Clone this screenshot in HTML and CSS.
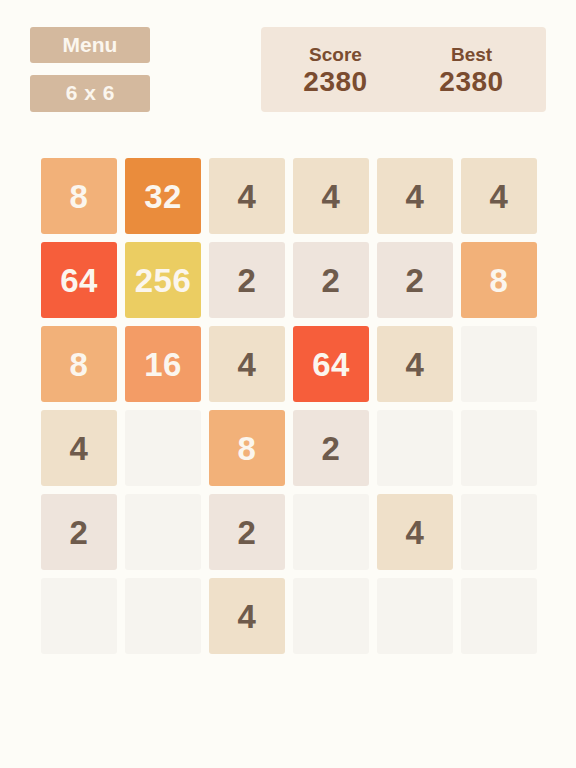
FILE: index.html
```html
<!DOCTYPE html>
<html>
<head>
<meta charset="utf-8">
<link rel="stylesheet" href="styles.css">
</head>
<body>
<div class="page">
  <header class="header">
    <div class="buttons">
      <div class="btn">Menu</div>
      <div class="btn">6 x 6</div>
    </div>
    <div class="scores">
      <div class="score-col"><div class="label">Score</div><div class="value">2380</div></div>
      <div class="score-col"><div class="label">Best</div><div class="value">2380</div></div>
    </div>
  </header>
  <main class="board">
    <div class="tile t8">8</div><div class="tile t32">32</div><div class="tile t4">4</div><div class="tile t4">4</div><div class="tile t4">4</div><div class="tile t4">4</div>
    <div class="tile t64">64</div><div class="tile t256">256</div><div class="tile t2">2</div><div class="tile t2">2</div><div class="tile t2">2</div><div class="tile t8">8</div>
    <div class="tile t8">8</div><div class="tile t16">16</div><div class="tile t4">4</div><div class="tile t64">64</div><div class="tile t4">4</div><div class="tile"></div>
    <div class="tile t4">4</div><div class="tile"></div><div class="tile t8">8</div><div class="tile t2">2</div><div class="tile"></div><div class="tile"></div>
    <div class="tile t2">2</div><div class="tile"></div><div class="tile t2">2</div><div class="tile"></div><div class="tile t4">4</div><div class="tile"></div>
    <div class="tile"></div><div class="tile"></div><div class="tile t4">4</div><div class="tile"></div><div class="tile"></div><div class="tile"></div>
  </main>
</div>
</body>
</html>
```
FILE: styles.css
```css
html, body {
  margin: 0;
  padding: 0;
  background: #fdfcf7;
}
body {
  width: 576px;
  height: 768px;
  font-family: "Liberation Sans", Arial, sans-serif;
  font-weight: bold;
}
.page {
  padding-top: 27px;
}
.header {
  display: flex;
  justify-content: space-between;
  padding: 0 30px;
  height: 85px;
}
.buttons {
  display: flex;
  flex-direction: column;
  gap: 12px;
  width: 120px;
}
.btn {
  height: 36px;
  background: #d4b99e;
  border-radius: 3px;
  color: #fbf6ee;
  font-size: 21px;
  line-height: 36px;
  text-align: center;
}
.btn + .btn {
  height: 37px;
  word-spacing: 1px;
}
.scores {
  width: 285px;
  height: 85px;
  background: #f2e6da;
  border-radius: 4px;
  display: flex;
  justify-content: center;
  gap: 16px;
  padding-top: 16px;
  box-sizing: border-box;
  color: #7a4c30;
}
.score-col {
  width: 120px;
  text-align: center;
}
.label {
  font-size: 19px;
  line-height: 24px;
}
.value {
  font-size: 28px;
  line-height: 30px;
  letter-spacing: 0.5px;
}
.board {
  display: grid;
  grid-template-columns: repeat(6, 76px);
  grid-auto-rows: 76px;
  gap: 8px;
  margin: 46px 0 0 41px;
}
.tile {
  background: #f6f4ef;
  border-radius: 3px;
  display: flex;
  align-items: center;
  justify-content: center;
  font-size: 33px;
  letter-spacing: 0.5px;
  color: #6e5b4c;
  padding-top: 2px;
  box-sizing: border-box;
}
.t2 { background: #eee4dc; }
.t4 { background: #efe0c9; }
.t8 { background: #f2b179; color: #fbf6ee; }
.t16 { background: #f39c66; color: #fbf6ee; }
.t32 { background: #ea8c3c; color: #fbf6ee; }
.t64 { background: #f65e3b; color: #fbf6ee; }
.t256 { background: #ebcd62; color: #fbf6ee; }
```
